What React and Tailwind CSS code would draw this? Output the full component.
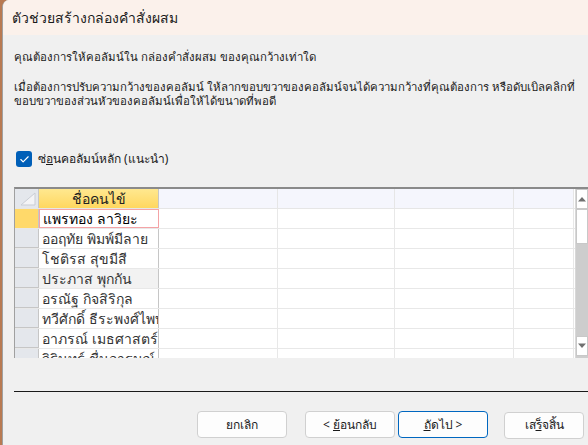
import { Check } from 'lucide-react'

const rows = [
  'แพรทอง ลาวิยะ',
  'ออฤทัย พิมพ์มีลาย',
  'โชติรส สุขมีสี',
  'ประภาส พุกกัน',
  'อรณัฐ กิจสิริกุล',
  'ทวีศักดิ์ ธีระพงศ์ไพบูลย์',
  'อาภรณ์ เมธศาสตร์',
  'จิรินทร์ ชื่นอารมณ์',
]

const extraCols = ['w-[119px]', 'w-[117px]', 'w-[119px]', 'w-[60px]']

function Button({ children, focused, narrow }) {
  return (
    <button
      className={`${narrow ? 'w-[80px]' : 'w-[90px]'} h-[27px] rounded-[4px] bg-[#fdfdfd] text-[12px] text-[#1a1a1a] border ${
        focused ? 'border-[#0067c0]' : 'border-[#d0d0d0]'
      }`}
    >
      {children}
    </button>
  )
}

export default function App() {
  return (
    <div
      className="w-[588px] h-[445px] overflow-hidden flex bg-[#b87a52]"
      style={{ fontFamily: 'Tahoma, "Noto Sans", "Liberation Sans", sans-serif' }}
    >
      <div className="w-[2px] shrink-0" />
      <div className="flex-1 flex flex-col bg-[#f0f0f0] border-l border-[#a0a0a0] rounded-tl-[7px] overflow-hidden">
        {/* title bar */}
        <div className="h-[35px] shrink-0 bg-[#fbf1eb] flex items-center pl-[9px] text-[14px] text-[#1a1a1a]">
          ตัวช่วยสร้างกล่องคำสั่งผสม
        </div>

        <div className="pl-[11px] text-[11.4px] leading-[14px] text-[#1a1a1a] whitespace-nowrap">
          <p className="mt-[15px]">คุณต้องการให้คอลัมน์ใน กล่องคำสั่งผสม ของคุณกว้างเท่าใด</p>
          <p className="mt-[16px]">
            เมื่อต้องการปรับความกว้างของคอลัมน์ ให้ลากขอบขวาของคอลัมน์จนได้ความกว้างที่คุณต้องการ หรือดับเบิลคลิกที่
            <br />
            ขอบขวาของส่วนหัวของคอลัมน์เพื่อให้ได้ขนาดที่พอดี
          </p>

          {/* checkbox */}
          <div className="mt-[43px] flex items-center gap-[6px] pl-[2px] text-[12px]">
            <span className="w-[16px] h-[16px] rounded-[3px] bg-[#005fb8] flex items-center justify-center">
              <Check size={11} strokeWidth={2.5} className="text-white" />
            </span>
            <span>
              ซ<span className="underline">่อ</span>นคอลัมน์หลัก (แนะนำ)
            </span>
          </div>
        </div>

        {/* datasheet */}
        <div className="mt-[20px] ml-[11px] h-[171px] shrink-0 flex border-t-2 border-l border-t-[#8a8a8a] border-l-[#a0a0a0] bg-white overflow-hidden">
          <div className="w-[560px] shrink-0 flex flex-col">
            <div className="h-[20px] shrink-0 flex border-b border-[#e6e6e6]">
              <div className="w-[24px] bg-[#e4e7ec] border-r border-[#c6c6c6] relative">
                <svg width="16" height="14" viewBox="0 0 16 14" className="absolute right-[2px] bottom-[2px]">
                  <path d="M15 1 L1 13 L15 13 Z" fill="#f4f4f6" stroke="#c9cdd4" strokeWidth="1" />
                </svg>
              </div>
              <div className="w-[120px] bg-gradient-to-b from-[#ffe88f] to-[#ffd75e] border-r border-[#c6c6c6] flex items-center justify-center text-[14px] text-[#222]">
                ชื่อคนไข้
              </div>
              {extraCols.map((w, i) => (
                <div key={i} className={`${w} bg-[#f5f6fd] border-r border-[#e6e6e6]`} />
              ))}
            </div>
            {rows.map((name, i) => (
              <div key={i} className="h-[20px] shrink-0 flex border-b border-[#e8e8e8]">
                <div
                  className={`w-[24px] border-r border-[#c6c6c6] ${
                    i === 0 ? 'bg-[#ffd96a]' : 'bg-[#e4e7ec] border-b border-b-[#c6c6c6]'
                  }`}
                />
                <div
                  className={`w-[120px] pl-[3px] flex items-center whitespace-nowrap overflow-hidden text-[14px] leading-none ${
                    i === 0
                      ? 'border border-[#f4a3a6] text-black font-medium'
                      : 'border-r border-[#c6c6c6] text-[#333]'
                  } ${i === 3 ? 'bg-[#f2f2f2]' : ''}`}
                >
                  {name}
                </div>
                {extraCols.map((w, j) => (
                  <div key={j} className={`${w} border-r border-[#e8e8e8]`} />
                ))}
              </div>
            ))}
          </div>
          {/* scrollbar */}
          <div className="flex-1 flex flex-col bg-[#cdcdcd] border-l border-[#d8d8d8]">
            <div className="h-[20px] bg-white border border-[#c8c8c8] flex items-center justify-center">
              <svg width="10" height="6" viewBox="0 0 10 6">
                <path d="M1 5.5 L5 1 L9 5.5 Z" fill="#707070" />
              </svg>
            </div>
            <div className="h-[35px] bg-white border border-[#c8c8c8]" />
            <div className="flex-1" />
            <div className="h-[20px] mb-[2px] bg-white border border-[#c8c8c8] flex items-center justify-center">
              <svg width="10" height="6" viewBox="0 0 10 6">
                <path d="M1 0.5 L5 5 L9 0.5 Z" fill="#707070" />
              </svg>
            </div>
          </div>
        </div>

        {/* separator */}
        <div className="mt-[33px] ml-[11px] h-px bg-[#1a1a1a]" />

        {/* buttons */}
        <div className="mt-[19px] flex pl-[194px]">
          <Button>ยกเลิก</Button>
          <div className="ml-[18px] flex gap-[3px]">
            <Button>
              &lt; <span className="underline">ย</span>้อนกลับ
            </Button>
            <Button focused>
              <span className="underline">ถ</span>ัดไป &gt;
            </Button>
          </div>
          <div className="ml-[16px]">
            <Button narrow>
              เส<span className="underline">ร</span>็จสิ้น
            </Button>
          </div>
        </div>
      </div>
    </div>
  )
}
